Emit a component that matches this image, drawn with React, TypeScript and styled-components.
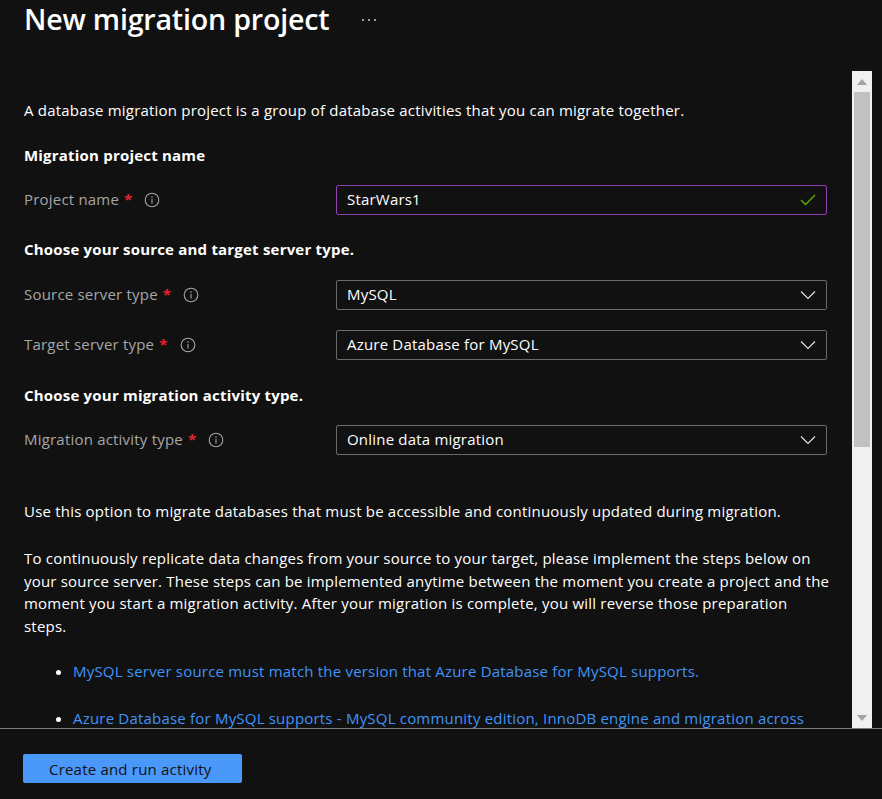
import React from "react";
import styled, { createGlobalStyle } from "styled-components";

const Global = createGlobalStyle`
  html, body { margin: 0; padding: 0; background: #111111; }
  body { font-family: "Open Sans", "Noto Sans", "Liberation Sans", sans-serif; color: #ffffff; }
  * { box-sizing: border-box; }
`;

const Page = styled.div`
  width: 882px;
  height: 799px;
  background: #111111;
  display: flex;
  flex-direction: column;
  overflow: hidden;
`;

const Header = styled.div`
  height: 71px;
  flex: none;
  display: flex;
  align-items: flex-start;
  padding: 2px 0 0 24px;
  gap: 32px;
`;

const Title = styled.h1`
  margin: 0;
  font-size: 28.6px;
  font-weight: 600;
  line-height: 34px;
  color: #ffffff;
  letter-spacing: -0.2px;
`;

const More = styled.span`
  display: flex;
  align-items: center;
  height: 34px;
  padding-top: 2px;
`;

const Body = styled.div`
  flex: none;
  height: 657px;
  display: flex;
  flex-direction: row;
`;

const Content = styled.div`
  flex: 1;
  overflow: hidden;
  padding: 28px 0 0 24px;
  font-size: 15px;
  letter-spacing: 0.2px;
  line-height: 22.6px;
`;

const Inner = styled.div`
  width: 806px;
`;

const Text = styled.p<{ $mt: number }>`
  margin: ${(p) => p.$mt}px 0 0;
  color: #ffffff;
`;

const Heading = styled.h2<{ $mt: number }>`
  margin: ${(p) => p.$mt}px 0 0;
  font-size: 15px;
  font-weight: 700;
  line-height: 22px;
  color: #ffffff;
`;

const Row = styled.div<{ $mt: number }>`
  margin-top: ${(p) => p.$mt}px;
  display: grid;
  grid-template-columns: 312px 491px;
  align-items: center;
`;

const Label = styled.div`
  display: flex;
  align-items: center;
  color: #a6a6a6;
`;

const Req = styled.span`
  color: #e8202c;
  font-weight: 700;
  margin-left: 5px;
  margin-right: 12px;
`;

const Field = styled.div<{ $focus?: boolean }>`
  height: 30px;
  border: 1px solid ${(p) => (p.$focus ? "#8e3fb0" : "#6b6b6b")};
  border-radius: 2px;
  display: flex;
  align-items: center;
  justify-content: space-between;
  padding: 0 10px 0 10px;
  color: #ffffff;
`;

const List = styled.ul`
  margin: 0;
  padding: 0 0 0 49px;
  list-style: disc;
`;

const Item = styled.li<{ $mt: number }>`
  margin-top: ${(p) => p.$mt}px;
  color: #ffffff;
  & > a {
    color: #4094f8;
    text-decoration: none;
  }
`;

const ScrollBar = styled.div`
  flex: none;
  width: 20px;
  margin-right: 10px;
  background: #f0f0f0;
  display: flex;
  flex-direction: column;
  align-items: center;
`;

const Arrow = styled.div`
  height: 21px;
  width: 100%;
  display: flex;
  align-items: center;
  justify-content: center;
`;

const Thumb = styled.div`
  width: 16px;
  height: 355px;
  background: #c1c1c1;
`;

const Spacer = styled.div`
  flex: 1;
`;

const Footer = styled.div`
  flex: 1;
  border-top: 1px solid #7a7a7a;
  padding: 25px 0 0 23px;
`;

const Button = styled.button`
  width: 219px;
  height: 29px;
  border: none;
  border-radius: 2px;
  background: #4a98fa;
  color: #111111;
  font-family: inherit;
  font-size: 15px;
  letter-spacing: 0.2px;
  text-align: left;
  padding: 0 0 0 26px;
`;

const InfoIcon = () => (
  <svg width="16" height="16" viewBox="0 0 16 16" fill="none">
    <circle cx="8" cy="8" r="6.8" stroke="#a6a6a6" strokeWidth="1.1" />
    <circle cx="8" cy="5" r="0.8" fill="#a6a6a6" />
    <line x1="8" y1="7" x2="8" y2="11.5" stroke="#a6a6a6" strokeWidth="1.1" />
  </svg>
);

const Chevron = () => (
  <svg width="16" height="10" viewBox="0 0 16 10" fill="none">
    <polyline points="1,1.5 8,8.5 15,1.5" stroke="#e6e6e6" strokeWidth="1.1" />
  </svg>
);

const Check = () => (
  <svg width="16" height="12" viewBox="0 0 16 12" fill="none">
    <polyline points="1,6 5.5,10.5 15,1" stroke="#5db300" strokeWidth="1.3" />
  </svg>
);

const Dots = () => (
  <svg width="16" height="4" viewBox="0 0 16 4">
    <circle cx="2" cy="2" r="1" fill="#cfcfcf" />
    <circle cx="8" cy="2" r="1" fill="#cfcfcf" />
    <circle cx="14" cy="2" r="1" fill="#cfcfcf" />
  </svg>
);

const Tri = ({ up }: { up?: boolean }) => (
  <svg width="10" height="6" viewBox="0 0 10 6">
    <polygon points={up ? "0,6 10,6 5,0" : "0,0 10,0 5,6"} fill="#a3a3a3" />
  </svg>
);

const FormRow = ({
  mt,
  label,
  value,
  focus,
}: {
  mt: number;
  label: string;
  value: string;
  focus?: boolean;
}) => (
  <Row $mt={mt}>
    <Label>
      {label}
      <Req>*</Req>
      <InfoIcon />
    </Label>
    <Field $focus={focus}>
      <span>{value}</span>
      {focus ? <Check /> : <Chevron />}
    </Field>
  </Row>
);

export default function App() {
  return (
    <Page>
      <Global />
      <Header>
        <Title>New migration project</Title>
        <More>
          <Dots />
        </More>
      </Header>
      <Body>
        <Content>
          <Inner>
            <Text $mt={0}>
              A database migration project is a group of database activities that you can migrate together.
            </Text>
            <Heading $mt={22}>Migration project name</Heading>
            <FormRow mt={19} label="Project name" value="StarWars1" focus />
            <Heading $mt={23}>Choose your source and target server type.</Heading>
            <FormRow mt={20} label="Source server type" value="MySQL" />
            <FormRow mt={20} label="Target server type" value="Azure Database for MySQL" />
            <Heading $mt={24}>Choose your migration activity type.</Heading>
            <FormRow mt={19} label="Migration activity type" value="Online data migration" />
            <Text $mt={45}>
              Use this option to migrate databases that must be accessible and continuously updated during migration.
            </Text>
            <Text $mt={25}>
              To continuously replicate data changes from your source to your target, please implement the steps below on
              your source server. These steps can be implemented anytime between the moment you create a project and the
              moment you start a migration activity. After your migration is complete, you will reverse those preparation
              steps.
            </Text>
            <List>
              <Item $mt={22}>
                <a href="#">MySQL server source must match the version that Azure Database for MySQL supports.</a>
              </Item>
              <Item $mt={25}>
                <a href="#">
                  Azure Database for MySQL supports - MySQL community edition, InnoDB engine and migration across
                </a>
              </Item>
            </List>
          </Inner>
        </Content>
        <ScrollBar>
          <Arrow>
            <Tri up />
          </Arrow>
          <Thumb />
          <Spacer />
          <Arrow>
            <Tri />
          </Arrow>
        </ScrollBar>
      </Body>
      <Footer>
        <Button>Create and run activity</Button>
      </Footer>
    </Page>
  );
}
